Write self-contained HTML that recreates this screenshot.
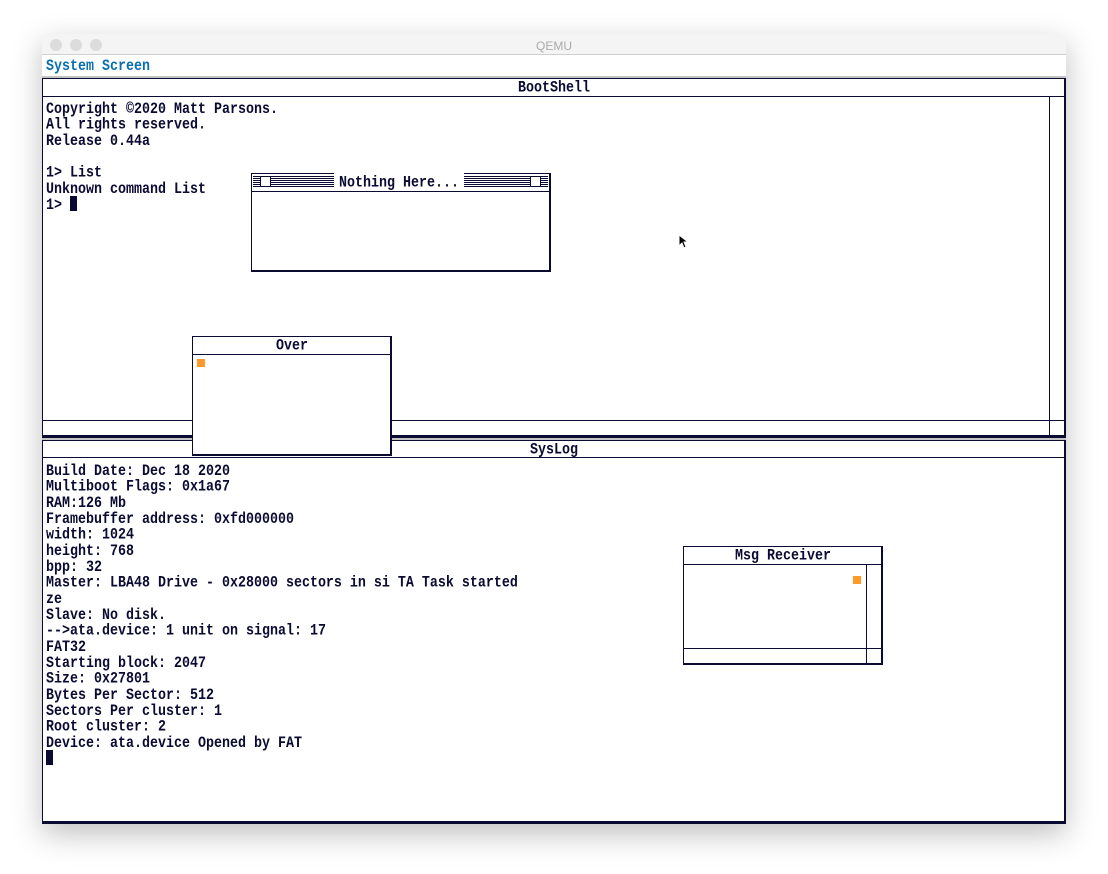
<!DOCTYPE html>
<html><head><meta charset="utf-8"><style>
*{margin:0;padding:0;box-sizing:border-box}
body{width:1108px;height:874px;background:#fff;position:relative;overflow:hidden;font-family:"Liberation Mono",monospace;color:#0a0a33}
.abs{position:absolute}
#win{left:42px;top:34px;width:1024px;height:790px;background:#fff;box-shadow:0 10px 30px rgba(0,0,0,.25);border-radius:5px 5px 0 0;overflow:hidden}
#tb{left:0;top:0;width:1024px;height:21px;background:#f4f4f4;border-bottom:1px solid #d0d0d0}
.dot{top:5px;width:12px;height:12px;border-radius:50%;background:#dcdcdc}
.t{font-weight:bold;font-size:13.33px;line-height:13.333px;white-space:pre;transform:scaleY(1.2);transform-origin:0 0}
.bx{border:1px solid #0a0a33;background:#fff}
.ln{background:#0a0a33}
.title{text-align:center;font-weight:bold;font-size:13.33px;line-height:18px;padding-top:2px;transform:scaleY(1.15);white-space:pre}
.or{background:#ff9a2a;width:8px;height:8px}
</style></head><body>
<div id="win" class="abs">
 <div id="tb" class="abs"></div>
 <div class="abs dot" style="left:8px"></div>
 <div class="abs dot" style="left:28px"></div>
 <div class="abs dot" style="left:48px"></div>
 <div class="abs" style="left:0;top:5px;width:1024px;text-align:center;font:12px 'Liberation Sans',sans-serif;color:#aaa">QEMU</div>
 <div class="abs t" style="left:4px;top:25px;color:#0a6fb0">System Screen</div>
 <div class="abs" style="left:0;top:42px;width:1024px;height:2px;background:#c4c4c4"></div>
</div>
<!-- BootShell -->
<div class="abs" style="left:42px;top:78px;width:1024px;height:360px;border:1px solid #0a0a33;border-right-width:2px;border-bottom-width:3px;background:#fff"></div>
<div class="abs title" style="left:42px;top:78px;width:1024px">BootShell</div>
<div class="abs ln" style="left:42px;top:96px;width:1024px;height:1px"></div>
<div class="abs ln" style="left:1049px;top:96px;width:1px;height:340px"></div>
<div class="abs ln" style="left:42px;top:420px;width:1024px;height:1px"></div>
<div class="abs t" style="left:46px;top:102px">Copyright ©2020 Matt Parsons.
All rights reserved.
Release 0.44a

1&gt; List
Unknown command List
1&gt; </div>
<div class="abs ln" style="left:70px;top:196px;width:7px;height:15px"></div>
<div class="abs" style="left:42px;top:438px;width:1024px;height:2px;background:#c4c4c4"></div>
<!-- SysLog -->
<div class="abs" style="left:42px;top:440px;width:1024px;height:384px;border:1px solid #0a0a33;border-right-width:2px;border-bottom-width:3px;background:#fff"></div>
<div class="abs title" style="left:42px;top:440px;width:1024px">SysLog</div>
<div class="abs ln" style="left:42px;top:457px;width:1024px;height:1px"></div>
<div class="abs t" style="left:46px;top:464px">Build Date: Dec 18 2020
Multiboot Flags: 0x1a67
RAM:126 Mb
Framebuffer address: 0xfd000000
width: 1024
height: 768
bpp: 32
Master: LBA48 Drive - 0x28000 sectors in si TA Task started
ze
Slave: No disk.
--&gt;ata.device: 1 unit on signal: 17
FAT32
Starting block: 2047
Size: 0x27801
Bytes Per Sector: 512
Sectors Per cluster: 1
Root cluster: 2
Device: ata.device Opened by FAT</div>
<div class="abs ln" style="left:46px;top:750px;width:7px;height:15px"></div>
<!-- Nothing Here -->
<div class="abs bx" style="left:251px;top:173px;width:300px;height:99px;border-right-width:2px;border-bottom-width:2px"></div>
<div class="abs" style="left:253px;top:176px;width:295px;height:11px;background:repeating-linear-gradient(#0a0a33 0 1px,#fff 1px 2px)"></div>
<div class="abs bx" style="left:260px;top:176px;width:11px;height:11px"></div>
<div class="abs bx" style="left:530px;top:176px;width:11px;height:11px"></div>
<div class="abs title" style="left:334px;top:173px;width:130px;background:#fff">Nothing Here...</div>
<div class="abs ln" style="left:251px;top:191px;width:300px;height:1px"></div>
<!-- Over -->
<div class="abs bx" style="left:192px;top:336px;width:200px;height:120px;border-right-width:2px;border-bottom-width:2px"></div>
<div class="abs title" style="left:192px;top:336px;width:200px">Over</div>
<div class="abs ln" style="left:192px;top:354px;width:200px;height:1px"></div>
<div class="abs or" style="left:197px;top:359px"></div>
<!-- Msg Receiver -->
<div class="abs bx" style="left:683px;top:546px;width:200px;height:119px;border-right-width:2px;border-bottom-width:2px"></div>
<div class="abs title" style="left:683px;top:546px;width:200px">Msg Receiver</div>
<div class="abs ln" style="left:683px;top:564px;width:200px;height:1px"></div>
<div class="abs ln" style="left:866px;top:564px;width:1px;height:100px"></div>
<div class="abs ln" style="left:683px;top:648px;width:200px;height:1px"></div>
<div class="abs or" style="left:853px;top:576px"></div>
<!-- mouse cursor -->
<svg class="abs" style="left:678px;top:234px" width="12" height="16" viewBox="0 0 12 16"><path d="M1 1 L1 12 L4 9 L6 14 L8 13 L6 8 L10 8 Z" fill="#000" stroke="#fff" stroke-width="1"/></svg>
</body></html>
